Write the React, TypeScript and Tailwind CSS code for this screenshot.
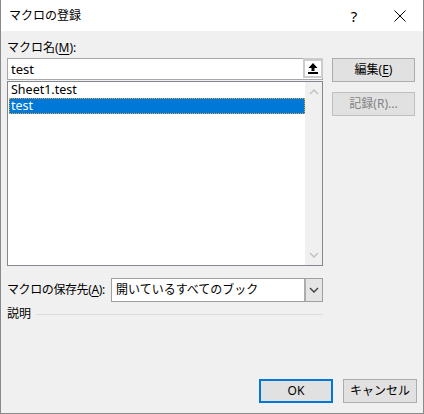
import React from "react";

const font = "font-['Noto_Sans','Noto_Sans_CJK_JP',sans-serif]";

function UpArrow() {
  return (
    <svg width="10" height="11" viewBox="0 0 10 11">
      <path d="M5 0 L9.5 5 L6.5 5 L6.5 8 L3.5 8 L3.5 5 L0.5 5 Z" fill="#000" />
      <rect x="0" y="9" width="10" height="2" fill="#000" />
    </svg>
  );
}

function Chevron({ down, color }: { down?: boolean; color: string }) {
  return (
    <svg width="10" height="6" viewBox="0 0 10 6">
      <path
        d={down ? "M1 1 L5 5 L9 1" : "M1 5 L5 1 L9 5"}
        stroke={color}
        strokeWidth="1.4"
        fill="none"
      />
    </svg>
  );
}

export default function App() {
  return (
    <div
      className={`w-[424px] h-[414px] border border-[#8a8a8a] border-t-0 flex flex-col text-[12px] text-black ${font}`}
    >
      {/* title bar */}
      <div className="h-[31px] bg-white flex items-center shrink-0">
        <div className="pl-[8px] flex-1 leading-[16px]">マクロの登録</div>
        <div className="w-[30px] text-center text-[15px] leading-[16px] mr-[16px]">?</div>
        <div className="w-[30px] flex justify-center mr-[8px]">
          <svg width="12" height="12" viewBox="0 0 12 12">
            <path d="M0.5 0.5 L11.5 11.5 M11.5 0.5 L0.5 11.5" stroke="#000" strokeWidth="1" />
          </svg>
        </div>
      </div>

      {/* body */}
      <div className="flex-1 bg-[#f0f0f0] pl-[6px] pt-[9px] flex flex-col">
        <div className="h-[16px] leading-[16px]">
          マクロ名(<span className="underline underline-offset-2">M</span>):
        </div>
        <div className="flex mt-[2px]">
          <div className="w-[316px] flex flex-col">
            <div className="h-[22px] bg-white border border-[#a8a8a8] flex items-center">
              <div className="flex-1 pl-[3px] leading-[16px] text-[13px]">test</div>
              <div className="w-[20px] h-[20px] bg-[#cccccc] flex items-center justify-center -mt-[2px] -mr-px">
                <div className="w-[16px] h-[15px] bg-white flex items-center justify-center">
                  <UpArrow />
                </div>
              </div>
            </div>
            <div className="h-[185px] mt-px bg-white border border-[#828790] flex">
              <div className="flex-1 pt-px pl-px text-[12.5px]">
                <div className="h-[15px] leading-[14px] pl-[2px]">Sheet1.test</div>
                <div className="h-[16px] leading-[14px] bg-[#0078d7] text-white border border-dotted border-[#e8a040] pl-px">
                  test
                </div>
              </div>
              <div className="w-[17px] bg-[#f0f0f0] flex flex-col items-center justify-between pt-[7px] pb-[7px]">
                <Chevron color="#c0c0c0" />
                <Chevron down color="#c0c0c0" />
              </div>
            </div>
          </div>
          <div className="ml-[9px] w-[83px] flex flex-col">
            <div className="h-[24px] bg-[#e1e1e1] border border-[#adadad] flex items-center justify-center">
              編集(<span className="underline underline-offset-2">E</span>)
            </div>
            <div className="h-[24px] mt-[10px] bg-[#e1e1e1] border border-[#bfbfbf] text-[#838383] flex items-center justify-center">
              記録(R)...
            </div>
          </div>
        </div>

        {/* combo */}
        <div className="flex items-center mt-[12px] h-[24px]">
          <div className="w-[104px] leading-[16px] tracking-[-0.4px]">
            マクロの保存先(<span className="underline underline-offset-2">A</span>):
          </div>
          <div className="w-[212px] h-[24px] bg-white border border-[#a0a0a0] flex">
            <div className="flex-1 pl-[4px] flex items-center leading-[16px]">開いているすべてのブック</div>
            <div className="w-[18px] bg-[#e5e5e5] border-l-2 border-[#adadad] flex items-center justify-center">
              <Chevron down color="#404040" />
            </div>
          </div>
        </div>

        {/* 説明 */}
        <div className="flex items-center mt-[4px] h-[16px]">
          <div className="leading-[16px]">説明</div>
          <div className="ml-[5px] w-[287px] h-px bg-[#dcdcdc]" />
        </div>

        <div className="flex-1" />

        {/* bottom buttons */}
        <div className="flex justify-end pr-[6px] mb-[10px]">
          <div className="w-[74px] h-[24px] bg-[#e1e1e1] border-2 border-[#0078d7] flex items-center justify-center">
            OK
          </div>
          <div className="ml-[10px] w-[74px] h-[24px] bg-[#e1e1e1] border border-[#adadad] flex items-center justify-center">
            キャンセル
          </div>
        </div>
      </div>
    </div>
  );
}
